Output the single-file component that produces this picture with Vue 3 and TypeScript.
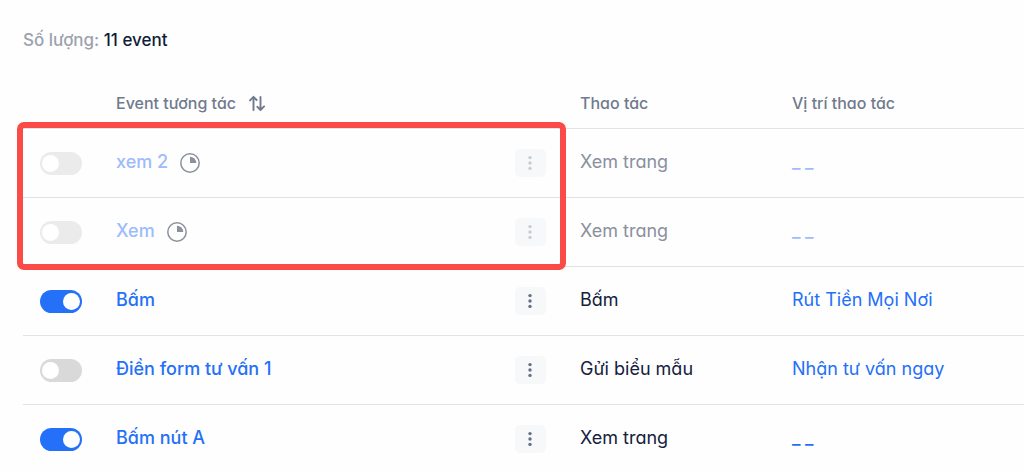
<script setup lang="ts">
import { ref } from 'vue'

interface EventRow {
  id: number
  name: string
  enabled: boolean
  pending: boolean
  action: string
  position: string
}

const rows = ref<EventRow[]>([
  { id: 1, name: 'xem 2', enabled: false, pending: true, action: 'Xem trang', position: '' },
  { id: 2, name: 'Xem', enabled: false, pending: true, action: 'Xem trang', position: '' },
  { id: 3, name: 'Bấm', enabled: true, pending: false, action: 'Bấm', position: 'Rút Tiền Mọi Nơi' },
  { id: 4, name: 'Điền form tư vấn 1', enabled: false, pending: false, action: 'Gửi biểu mẫu', position: 'Nhận tư vấn ngay' },
  { id: 5, name: 'Bấm nút A', enabled: true, pending: false, action: 'Xem trang', position: '' },
])
</script>

<template>
  <main class="page">
    <p class="summary">Số lượng: <strong>11 event</strong></p>

    <div class="table-wrap">
      <table class="events">
        <colgroup>
          <col class="col-toggle" />
          <col class="col-name" />
          <col class="col-action" />
          <col />
        </colgroup>
        <thead>
          <tr>
            <th></th>
            <th scope="col">
              <button type="button" class="sort">
                Event tương tác
                <svg width="18" height="18" viewBox="0 0 18 18" aria-hidden="true">
                  <path d="M5.5 16V3M2 6.4 5.5 2.8 8.6 6M12.5 3v13M9.4 12.8l3.1 3.2 3.6-3.6" />
                </svg>
              </button>
            </th>
            <th scope="col">Thao tác</th>
            <th scope="col">Vị trí thao tác</th>
          </tr>
        </thead>
        <tbody>
          <tr v-for="row in rows" :key="row.id" :class="{ pending: row.pending }">
            <td class="toggle-cell">
              <input v-model="row.enabled" type="checkbox" role="switch" class="switch" :aria-label="row.name" :disabled="row.pending" />
            </td>
            <td>
              <div class="name-cell">
                <a href="#" class="name">{{ row.name }}</a>
                <svg v-if="row.pending" class="clock" width="20" height="20" viewBox="0 0 20 20" aria-hidden="true">
                  <circle cx="10" cy="10" r="9.2" />
                  <path d="M10 3.8A6.2 6.2 0 0 1 16.2 10H10Z" />
                </svg>
                <button type="button" class="more" :aria-label="row.name" :disabled="row.pending">
                  <svg width="5" height="16" viewBox="0 0 5 16" aria-hidden="true">
                    <circle cx="2" cy="2.6" r="1.7" />
                    <circle cx="2" cy="8" r="1.7" />
                    <circle cx="2" cy="13.4" r="1.7" />
                  </svg>
                </button>
              </div>
            </td>
            <td class="text-cell">{{ row.action }}</td>
            <td class="text-cell">
              <a v-if="row.position" href="#">{{ row.position }}</a>
              <a v-else href="#" class="blank">_ _</a>
            </td>
          </tr>
        </tbody>
      </table>
      <div class="highlight"></div>
    </div>
  </main>
</template>

<style>
body {
  background: #fefefe;
}
</style>

<style scoped>
.page {
  padding: 28px 0 0 23px;
  color: #14213d;
  font-family: Inter, "Noto Sans", sans-serif;
  font-size: 18px;
  line-height: 24px;
  font-feature-settings: "cv11";
}

.summary {
  margin: 0;
  color: #9ca2ae;
  font-size: 17px;
  font-weight: 500;
}

.summary strong {
  color: #101d38;
  font-weight: 500;
}

.table-wrap {
  position: relative;
  margin-top: 28px;
}

.events {
  width: 100%;
  table-layout: fixed;
  border-collapse: separate;
  border-spacing: 0;
}

.col-toggle {
  width: 93px;
}

.col-name {
  width: 464px;
}

.col-action {
  width: 212px;
}

th,
td {
  box-sizing: border-box;
  padding: 0;
  text-align: left;
  vertical-align: middle;
}

th {
  height: 49px;
  padding-bottom: 2px;
  border-bottom: 1px solid #e2e3e5;
  color: #717a8c;
  font-size: 16px;
  font-weight: 500;
}

td {
  height: 69px;
  border-bottom: 1px solid #e2e3e5;
}

.toggle-cell {
  padding-left: 17px;
}

.text-cell {
  padding-bottom: 2px;
}

.sort {
  display: flex;
  align-items: center;
  gap: 12px;
  padding: 0;
  border: 0;
  background: none;
  color: inherit;
  font: inherit;
  font-feature-settings: inherit;
}

.sort svg {
  fill: none;
  stroke: currentColor;
  stroke-width: 1.9;
  stroke-linecap: round;
  stroke-linejoin: round;
}

.switch {
  display: block;
  appearance: none;
  box-sizing: border-box;
  width: 42px;
  height: 23px;
  margin: 0;
  padding: 3px 2px;
  border-radius: 12px;
  background: #d9d9d9;
}

.switch::before {
  content: "";
  display: block;
  width: 17px;
  height: 17px;
  border-radius: 50%;
  background: #fff;
}

.switch:checked {
  background: #2470f8;
}

.switch:checked::before {
  margin-left: auto;
}

.pending .switch {
  background: #ebebeb;
}

.name-cell {
  display: flex;
  align-items: center;
  padding-right: 34px;
}

a {
  color: #2470f8;
  text-decoration: none;
}

.name {
  padding-bottom: 3px;
  font-weight: 500;
}

.blank {
  font-weight: 600;
}

.clock {
  margin-left: 12px;
  fill: none;
  stroke: #8b919e;
  stroke-width: 1.5;
}

.clock path {
  fill: #8b919e;
  stroke: none;
}

.more {
  display: flex;
  align-items: center;
  justify-content: center;
  width: 31px;
  height: 28px;
  margin-left: auto;
  padding: 0;
  border: 0;
  border-radius: 5px;
  background: #f7f8fa;
  color: #667081;
}

.more svg {
  fill: currentColor;
}

.pending {
  color: #8a909e;
}

.pending a {
  color: #9cbcfb;
}

.pending .more {
  color: #c9ccd0;
}

.highlight {
  position: absolute;
  top: 42px;
  left: -6px;
  box-sizing: border-box;
  width: 549px;
  height: 148px;
  border: 6px solid #fa4b48;
  border-radius: 7px;
  pointer-events: none;
}
</style>
